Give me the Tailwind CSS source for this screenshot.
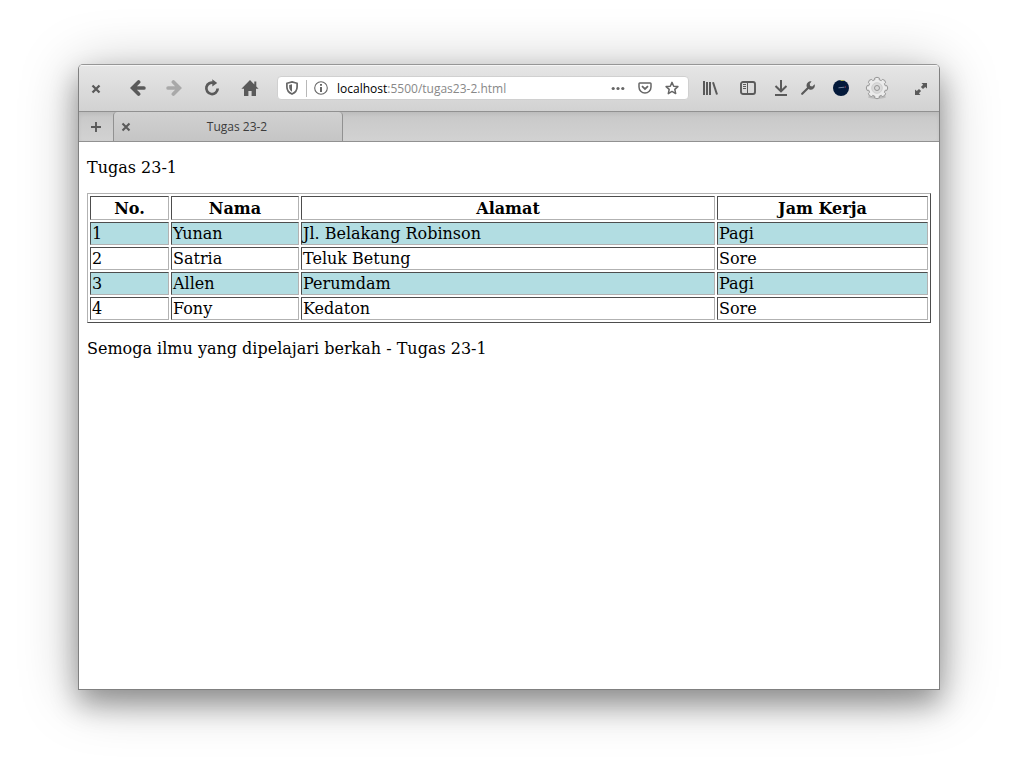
<!DOCTYPE html>
<html lang="id">
<head>
<meta charset="utf-8">
<title>Tugas 23-2</title>
<script src="https://cdn.jsdelivr.net/npm/@tailwindcss/browser@4"></script>
</head>
<body class="w-[1018px] h-[782px] overflow-hidden bg-white pt-[64px] pl-[78px]">
<div class="w-[862px] h-[626px] rounded-t-[5px] shadow-[0_14px_28px_rgba(0,0,0,0.33),0_6px_58px_rgba(0,0,0,0.27)]">
<div class="w-full h-full border border-[#808080] border-t-[#969696] rounded-t-[5px] overflow-hidden bg-white flex flex-col">
  <header class="h-[47px] shrink-0 flex items-center border-b border-[#919191] bg-linear-to-b from-[#e6e6e6] to-[#d2d2d2] text-[#5a5a5a] shadow-[inset_0_1px_0_#f5f5f5]">
    <div class="w-[34px] flex justify-center pt-px"><svg width="10" height="10" viewBox="0 0 10 10"><path d="M1.5 1.5 8.5 8.5M8.5 1.5 1.5 8.5" stroke="currentColor" stroke-width="2.3"/></svg></div>
    <div class="w-[49px] flex justify-center"><svg width="16" height="18" viewBox="0 0 16 18"><path d="M8.6 3 2.6 9 8.6 15M4 9H13.9" fill="none" stroke="currentColor" stroke-width="3.7" stroke-linecap="round"/></svg></div>
    <div class="w-[24px] flex justify-center text-[#a9a9a9]"><svg width="16" height="18" viewBox="0 0 16 18"><path d="M7.4 3 13.4 9 7.4 15M12 9H2.1" fill="none" stroke="currentColor" stroke-width="3.7" stroke-linecap="round"/></svg></div>
    <div class="w-[52px] flex justify-center"><svg width="16" height="18" viewBox="0 0 16 18"><path d="M13.7 9.5A5.7 5.7 0 1 1 10 4" fill="none" stroke="currentColor" stroke-width="2.7"/><path d="M8.3 .3 13.2 4 8.3 7.6Z" fill="currentColor"/></svg></div>
    <div class="w-[24px] flex justify-center"><svg width="18" height="18" viewBox="0 0 18 18"><path d="M9 1 .4 9.8H3V17h4.4v-5h3.2v5H15V9.8h2.6L15.3 7.4V2.4h-2v3Z" fill="currentColor"/></svg></div>
    <div class="ml-[15px] w-[412px] h-[24px] rounded-[4px] border border-[#d0d0d0] bg-white flex items-center font-['Open_Sans',sans-serif] text-[12px] text-[#666]">
      <svg class="ml-[8px]" width="12" height="14" viewBox="0 0 12 14"><path d="M6 .9 11.1 2.3V6C11.1 9.2 9.2 11.6 6 13.1 2.8 11.6.9 9.2.9 6V2.3Z" fill="none" stroke="currentColor" stroke-width="1.7"/><path d="M6 3.2V10.7C4 9.4 3.2 8 3.2 6V4Z" fill="currentColor"/></svg>
      <div class="ml-[8px] w-px h-[17px] bg-[#b8b8b8]"></div>
      <svg class="ml-[7px]" width="14" height="14" viewBox="0 0 14 14"><circle cx="7" cy="7" r="6.3" fill="none" stroke="currentColor" stroke-width="1.1"/><path d="M6 3h2v1.8H6ZM6 6H8v5H6Z" fill="currentColor"/></svg>
      <div class="ml-[9px] pt-[2px] whitespace-nowrap text-[#888] leading-[16px]"><span class="text-black">localhost</span>:5500/tugas23-2.html</div>
      <svg class="ml-auto" width="14" height="14" viewBox="0 0 14 14" fill="currentColor"><circle cx="2.2" cy="7.5" r="1.6"/><circle cx="7" cy="7.5" r="1.6"/><circle cx="11.8" cy="7.5" r="1.6"/></svg>
      <svg class="ml-[13px]" width="14" height="14" viewBox="0 0 14 14"><path d="M1.8 2H12.2Q13 2 13 2.8V6A6 6 0 0 1 1 6V2.8Q1 2 1.8 2Z" fill="none" stroke="currentColor" stroke-width="1.5"/><path d="M4 5.2 7 8 10 5.2" fill="none" stroke="currentColor" stroke-width="1.8"/></svg>
      <svg class="ml-[13px] mr-[9px]" width="14" height="14" viewBox="0 0 14 14"><path d="M7 1.4 8.7 5.2 12.9 5.6 9.8 8.4 10.7 12.6 7 10.4 3.3 12.6 4.2 8.4 1.1 5.6 5.3 5.2Z" fill="none" stroke="currentColor" stroke-width="1.5" stroke-linejoin="round"/></svg>
    </div>
    <div class="w-[42px] pl-[2px] flex justify-center"><svg width="16" height="14" viewBox="0 0 16 14"><path d="M1 0V14M4 1V14M7 1V14" stroke="currentColor" stroke-width="2"/><path d="M10 1.2 14 13.5" stroke="currentColor" stroke-width="2"/></svg></div>
    <div class="w-[34px] flex justify-center"><svg width="16" height="14" viewBox="0 0 16 14"><rect x="1" y="1" width="14" height="12" rx="2" fill="none" stroke="currentColor" stroke-width="1.9"/><path d="M7.5 1V13" stroke="currentColor" stroke-width="1"/><path d="M3 3.5H6M3 5.5H6M3 7.5H6" stroke="currentColor" stroke-width="1"/></svg></div>
    <div class="w-[32px] flex justify-center"><svg width="14" height="16" viewBox="0 0 14 16"><path d="M7 0V11M1.5 6 7 11.3 12.5 6M1 15H13" fill="none" stroke="currentColor" stroke-width="2"/></svg></div>
    <div class="w-[22px] flex justify-center"><svg width="14" height="14" viewBox="0 0 14 14"><path d="M1.2 12.8 7 7" stroke="currentColor" stroke-width="2.2" stroke-linecap="round"/><path d="M10.6.5A4.1 4.1 0 0 0 5.6 5.2Q5.8 8 8.4 8.5A4.1 4.1 0 0 0 13.6 3.3L11.3 5.4 9.2 5 8.7 2.8Z" fill="currentColor"/></svg></div>
    <div class="w-[44px] flex justify-center"><svg width="16" height="16" viewBox="0 0 16 16"><circle cx="8" cy="8" r="8" fill="#03193a"/><path d="M7.5.5H11" stroke="#b0b45c" stroke-width="1"/><path d="M5.5 7.8 11.5 7.2" stroke="#71809a" stroke-width="1"/><path d="M12 7H13" stroke="#bd3440" stroke-width="1.2"/></svg></div>
    <div class="w-[28px] flex justify-center"><svg width="24" height="24" viewBox="0 0 24 24"><ellipse cx="12" cy="21" rx="9" ry="1.8" fill="#bdbdbd"/><g fill="#ebebeb" stroke="#959595" stroke-width="1"><path d="M9.8 3.7 9.6 2.1Q12 .4 14.4 2.1L14.2 3.7 16.3 4.6 17.4 3.4Q20.4 3.6 20.6 6.6L19.4 7.7 20.3 9.8 21.9 9.6Q23.6 12 21.9 14.4L20.3 14.2 19.4 16.3 20.6 17.4Q20.4 20.4 17.4 20.6L16.3 19.4 14.2 20.3 14.4 21.9Q12 23.6 9.6 21.9L9.8 20.3 7.7 19.4 6.6 20.6Q3.6 20.4 3.4 17.4L4.6 16.3 3.7 14.2 2.1 14.4Q.4 12 2.1 9.6L3.7 9.8 4.6 7.7 3.4 6.6Q3.6 3.6 6.6 3.4L7.7 4.6Z"/><circle cx="12" cy="12" r="5.3" fill="#dadada" stroke="#cfcfcf"/><circle cx="12" cy="12" r="2.5" fill="#d8d8d8"/></g></svg></div>
    <div class="ml-auto w-[36px] flex justify-center pt-px"><svg width="12" height="12" viewBox="0 0 12 12"><path d="M6.5 0H12V5.5L10.2 3.9 8 6.1 5.9 4 8.1 1.8ZM5.5 12H0V6.5L1.8 8.1 4 5.9 6.1 8 3.9 10.2Z" fill="currentColor"/><path d="M4.2 4.2 7.8 7.8" stroke="#dcdcdc" stroke-width="1"/></svg></div>
  </header>
  <nav class="h-[30px] shrink-0 flex items-stretch border-b border-[#919191] bg-linear-to-b from-[#c6c6c6] via-[#cbcbcb] via-30% to-[#d2d2d2] text-[#5a5a5a] shadow-[inset_0_2px_4px_rgba(0,0,0,0.06)]">
    <div class="w-[34px] flex items-center justify-center"><svg width="10" height="10" viewBox="0 0 10 10"><path d="M5 0V10M0 5H10" stroke="currentColor" stroke-width="1.9"/></svg></div>
    <div class="w-[230px] flex items-center border-x border-[#919191] rounded-t-[4px] bg-linear-to-b from-[#d1d1d1] to-[#c5c5c5] pl-[7px]">
      <svg class="mt-px" width="10" height="10" viewBox="0 0 10 10"><path d="M1.5 1.5 8.5 8.5M8.5 1.5 1.5 8.5" stroke="currentColor" stroke-width="2.1"/></svg>
      <div class="flex-1 pl-px text-center font-['Open_Sans',sans-serif] text-[12px] leading-[16px] text-[#3c3c3c]">Tugas 23-2</div>
    </div>
  </nav>
  <main class="flex-1 px-[8px] pt-[16px] font-['DejaVu_Serif',serif] text-[16px] leading-[19px] text-black">
    <p>Tugas 23-1</p>
    <table class="mt-[16px] w-[844px] table-fixed border-separate border-spacing-[2px] border border-t-[#b2b2b2] border-l-[#b2b2b2] border-r-[#4d4d4d] border-b-[#4d4d4d] [&_:is(td,th)]:border [&_:is(td,th)]:border-t-[#4d4d4d] [&_:is(td,th)]:border-l-[#4d4d4d] [&_:is(td,th)]:border-r-[#b2b2b2] [&_:is(td,th)]:border-b-[#b2b2b2] [&_:is(td,th)]:p-px">
      <colgroup><col class="w-[79px]"><col class="w-[128px]"><col class="w-[414px]"><col class="w-[211px]"></colgroup>
      <tr class="h-[24px] font-bold"><th>No.</th><th>Nama</th><th>Alamat</th><th>Jam Kerja</th></tr>
      <tr class="h-[23px] [&>td]:bg-[#b2dde2]"><td>1</td><td>Yunan</td><td>Jl. Belakang Robinson</td><td>Pagi</td></tr>
      <tr class="h-[23px]"><td>2</td><td>Satria</td><td>Teluk Betung</td><td>Sore</td></tr>
      <tr class="h-[23px] [&>td]:bg-[#b2dde2]"><td>3</td><td>Allen</td><td>Perumdam</td><td>Pagi</td></tr>
      <tr class="h-[23px]"><td>4</td><td>Fony</td><td>Kedaton</td><td>Sore</td></tr>
    </table>
    <p class="mt-[16px]">Semoga ilmu yang dipelajari berkah - Tugas 23-1</p>
  </main>
</div>
</div>
</body>
</html>
